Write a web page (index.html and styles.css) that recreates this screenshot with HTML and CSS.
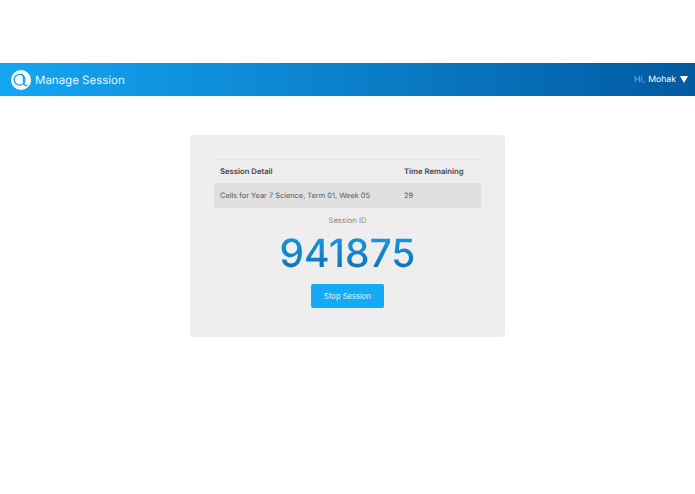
FILE: index.html
```html
<!DOCTYPE html>
<html lang="en">
<head>
    <meta charset="UTF-8">
    <title>Manage Session</title>
    <link rel="stylesheet" href="styles.css">
</head>
<body>
    <!-- Header -->
    <header class="header">
        <div class="brand">
            <svg class="logo" viewBox="0 0 20 20" width="20" height="20">
                <circle cx="10" cy="10" r="10" fill="#fff"/>
                <circle cx="8.6" cy="9.8" r="5.4" fill="none" stroke="#14a0ea" stroke-width="1.3"/>
                <path d="M11.2 4 C12.6 4.8 12.4 8 12.6 11.5 C12.8 14.5 13.6 16.2 16.4 15.6" fill="none" stroke="#14a0ea" stroke-width="1.3"/>
            </svg>
            <span class="title">Manage Session</span>
        </div>
        <div class="user"><span class="greet">Hi,</span> Mohak <span class="arrow"></span></div>
    </header>

    <!-- Session Card -->
    <main class="card">
        <div class="table-head">
            <div class="col-detail">Session Detail</div>
            <div class="col-time">Time Remaining</div>
        </div>
        <div class="table-row">
            <div class="col-detail">Cells for Year 7 Science, Term 01, Week 05</div>
            <div class="col-time">29</div>
        </div>
        <div class="session-label">Session ID</div>
        <div class="session-id">941875</div>
        <button class="stop-btn">Stop Session</button>
    </main>
</body>
</html>
```

FILE: styles.css
```css
body {
    margin: 0;
    background-color: #fff;
    font-family: Inter, "Liberation Sans", sans-serif;
    text-rendering: geometricPrecision;
}

.header {
    display: flex;
    justify-content: space-between;
    align-items: center;
    height: 33px;
    margin-top: 63px;
    padding: 0 7px 0 11px;
    background: linear-gradient(to right, #14a6f2 0%, #0f8fdb 30%, #015aa0 100%);
    color: #fff;
}

.brand {
    display: flex;
    align-items: center;
    gap: 4px;
}

.logo {
    display: block;
}

.title {
    font-size: 11.5px;
    color: #e6f5fe;
}

.user {
    font-size: 8.7px;
    display: flex;
    align-items: center;
    gap: 3px;
}

.greet {
    color: #7db4e0;
}

.arrow {
    width: 0;
    height: 0;
    margin-left: 1px;
    border-left: 4px solid transparent;
    border-right: 4px solid transparent;
    border-top: 7px solid #fff;
}

.card {
    width: 315px;
    height: 202px;
    box-sizing: border-box;
    margin: 39px auto 0;
    padding: 24px 24px 0;
    background-color: #eee;
    border-radius: 4px;
    display: flex;
    flex-direction: column;
    align-items: center;
    color: #555;
}

.table-head,
.table-row {
    display: flex;
    align-items: center;
    align-self: stretch;
}

.table-head {
    height: 24px;
    box-sizing: border-box;
    border-top: 1px solid #e6e6e6;
    font-size: 7.7px;
    font-weight: 600;
    color: #444;
}

.table-row {
    height: 25px;
    background-color: #e0e0e0;
    font-size: 7.4px;
}

.col-detail {
    width: 184px;
    padding-left: 6px;
}

.session-label {
    margin-top: 8px;
    font-size: 7.6px;
    color: #8a8a8a;
}

.session-id {
    margin-top: 5px;
    font-size: 39px;
    font-weight: 500;
    line-height: 48px;
    background: linear-gradient(to bottom, #18a0e8, #0b68ae);
    -webkit-background-clip: text;
    background-clip: text;
    color: transparent;
}

.stop-btn {
    width: 73px;
    height: 24px;
    margin-top: 6px;
    padding: 0;
    border: none;
    border-radius: 2px;
    background-color: #16a9f6;
    color: #e6f5fe;
    font-family: inherit;
    font-size: 7.6px;
}
```
